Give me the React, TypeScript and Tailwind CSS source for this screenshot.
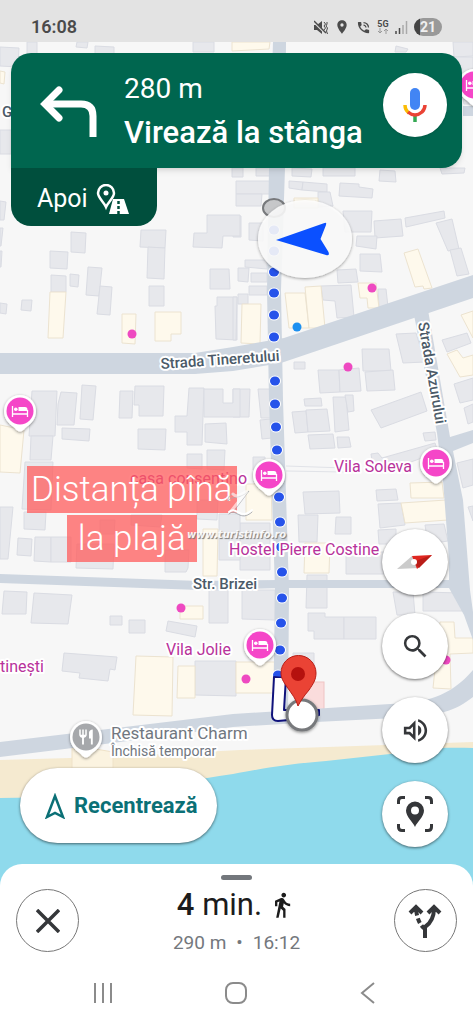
import { ReactNode } from "react";
import {
  MdDirectionsWalk,
  MdLocationOn,
  MdOutlineVolumeUp,
  MdPhoneInTalk,
  MdRestaurant,
  MdSearch,
} from "react-icons/md";

type Point = [number, number];

interface PinProps {
  x: number;
  y: number;
  closed?: boolean;
}

interface RoundButtonProps {
  label: string;
  children: ReactNode;
}

const greyBuildings: string[] = [
  "27,42 37,42 37,54 27,54",
  "77,42 88,42 87,48 76,47",
  "95,46 114,47 114,54 95,54",
  "193,42 214,42 214,52 193,52",
  "0,47 19,48 18,67 0,66",
  "0,130 11,130 11,154 0,154",
  "0,201 6,202 4,220 0,220",
  "0,228 3,228 1,246 0,246",
  "0,251 2,251 1,267 0,267",
  "232,168 243,168 243,177 232,177",
  "236,181 271,181 270,194 236,194",
  "236,194 262,194 261,206 236,206",
  "256,168 270,168 270,176 256,176",
  "292,168 312,169 311,177 292,176",
  "323,168 355,168 355,176 323,176",
  "380,170 395,171 396,182 379,181",
  "440,168 465,168 464,173 442,174",
  "289,181 303,182 302,190 289,188",
  "303,182 327,184 327,192 302,190",
  "340,183 359,184 359,187 373,189 372,198 339,196",
  "318,192 330,192 333,206 318,207",
  "233,216 241,216 241,237 233,237",
  "249,223 263,223 263,241 249,240",
  "343,211 372,211 371,232 345,232",
  "374,221 401,219 403,236 375,238",
  "405,218 444,211 445,218 406,227",
  "436,223 452,219 459,249 448,251",
  "450,250 461,248 469,274 457,276",
  "396,46 408,49 406,52 395,52",
  "453,42 473,42 473,56 454,57",
  "454,57 473,57 473,104 464,104",
  "71,232 86,233 85,253 71,252",
  "50,251 68,252 67,269 50,268",
  "51,275 66,276 66,292 51,292",
  "70,274 79,275 78,287 70,286",
  "88,267 102,268 99,296 86,295",
  "100,286 112,287 110,315 97,314",
  "22,300 32,300 31,311 21,310",
  "0,303 7,304 6,314 0,313",
  "141,230 166,230 165,248 140,247",
  "148,247 165,248 164,279 147,278",
  "149,286 164,286 164,306 149,306",
  "210,269 229,269 230,289 210,289",
  "217,297 237,297 237,340 216,339 215,306 217,306",
  "207,215 240,215 240,236 223,236 222,248 193,247 194,233 207,233",
  "357,236 377,236 376,249 356,246",
  "360,254 380,254 382,272 360,271",
  "337,270 356,269 358,282 338,283",
  "245,260 267,260 267,269 245,267",
  "238,268 249,268 248,282 238,281",
  "251,273 267,273 267,282 251,282",
  "249,286 267,286 267,295 249,295",
  "238,294 248,294 248,304 238,304",
  "233,297 237,297 236,340 233,340",
  "321,286 351,285 354,317 337,318 335,301 323,300",
  "378,289 386,289 388,307 379,307",
  "442,340 467,333 471,343 447,352",
  "454,384 473,378 473,400 460,403",
  "396,334 416,333 425,362 403,363",
  "362,349 389,349 391,371 363,371",
  "365,372 393,370 395,390 367,391",
  "318,370 339,370 340,392 320,393",
  "339,370 359,368 361,391 340,392",
  "294,362 305,362 305,369 294,369",
  "304,399 321,398 322,406 305,406",
  "333,397 346,397 349,430 335,432",
  "345,395 353,395 354,411 348,412",
  "292,412 306,411 308,432 295,433",
  "306,410 327,409 330,431 308,432",
  "233,389 250,389 249,417 233,417",
  "258,389 270,389 272,418 261,418",
  "371,410 421,392 427,411 381,428",
  "464,408 473,404 473,422 468,424",
  "308,435 333,434 335,448 310,449",
  "337,437 349,437 351,447 338,448",
  "260,420 271,419 272,438 262,439",
  "423,433 435,432 436,440 425,441",
  "371,454 378,453 382,458 435,443 438,452 400,466 373,466",
  "253,457 265,457 265,470 253,470",
  "303,492 339,491 340,513 305,514",
  "298,515 318,515 317,542 299,542",
  "336,517 351,517 351,534 335,534",
  "376,490 396,489 398,500 377,501",
  "378,504 401,503 405,525 380,528",
  "378,530 396,529 396,544 379,544",
  "425,525 444,524 448,541 428,544",
  "240,523 270,523 270,570 240,570",
  "346,552 392,552 392,574 346,574",
  "457,463 473,459 473,485 463,488",
  "468,507 473,506 473,521",
  "32,391 57,391 55,436 29,436",
  "61,392 77,393 74,425 57,425 58,404",
  "82,385 96,386 93,420 80,419",
  "120,391 133,391 132,418 119,418",
  "135,386 164,386 163,416 139,416 139,405 134,405",
  "62,428 90,429 89,441 62,439",
  "138,429 166,429 165,450 138,449",
  "31,436 53,436 51,460 30,460",
  "25,462 53,462 51,510 22,509",
  "175,416 187,416 189,388 204,388 202,445 187,445 187,432 175,432",
  "204,389 223,389 223,403 233,403 233,389 240,389 240,417 204,417",
  "205,424 226,423 227,444 205,442",
  "187,454 202,454 202,469 187,468",
  "207,450 225,450 224,470 207,469",
  "24,512 46,512 45,530 24,529",
  "0,507 13,507 8,559 0,559",
  "18,538 32,539 31,556 17,555",
  "35,537 51,537 51,562 34,561",
  "51,537 71,537 71,562 51,562",
  "77,544 114,544 113,569 76,568",
  "100,520 115,520 114,534 100,534",
  "131,515 162,515 160,527 131,525",
  "165,550 189,550 188,568 186,572 165,572",
  "197,500 218,500 217,520 197,519",
  "219,514 240,514 240,560 219,560",
  "4,591 27,592 26,614 2,614",
  "34,593 72,595 68,624 31,623",
  "110,616 122,616 122,625 110,625",
  "129,620 145,620 145,633 129,633",
  "209,590 228,590 228,623 209,623",
  "168,621 197,626 195,637 166,631",
  "64,653 117,657 115,670 110,669 108,681 79,678 80,673 62,671",
  "195,661 236,661 236,696 195,695",
  "242,590 275,590 275,620 242,619",
  "307,575 327,575 327,608 306,608",
  "308,613 325,613 325,617 344,617 344,639 314,639 314,631 308,631",
  "344,617 376,617 376,639 344,639",
  "293,653 314,653 314,683 293,683",
  "393,592 413,592 415,615 397,615",
  "423,592 461,593 462,611 423,611",
];

const yellowBuildings: string[] = [
  "0,71 5,72 4,84 0,83",
  "232,42 270,42 269,49 232,51",
  "294,198 318,198 318,208 294,208",
  "50,292 66,292 63,338 48,338",
  "122,314 136,314 135,344 122,343",
  "155,312 181,312 181,334 171,334 171,341 155,341",
  "404,253 418,249 432,288 424,289 423,286 415,287",
  "242,304 261,304 260,344 241,343",
  "285,293 305,293 309,328 289,328",
  "305,287 321,286 325,328 309,328",
  "358,283 376,283 379,308 368,308 367,298 360,298",
  "461,315 473,311 473,338",
  "447,354 457,350 463,358 473,355 473,375 460,377",
  "246,484 271,484 272,520 246,520",
  "410,483 442,482 444,498 411,498",
  "401,503 446,500 448,520 405,523",
  "305,543 330,543 329,573 304,573",
  "0,425 24,430 20,473 0,472",
  "203,529 218,529 217,576 203,576",
  "180,606 203,606 203,619 180,619",
  "136,656 173,657 172,716 133,715",
  "178,666 195,666 195,698 177,698",
  "236,662 275,662 275,693 236,693",
  "440,622 454,622 455,638 473,638 473,653 450,654 451,689 433,688",
];

const roads: string[] = [
  "273,42 286,42 285,168 281,290 283,400 289,590 288,722 273,724 275,590 269,400 267,290 269,168",
  "0,353 195,353 233,347 284,338 473,275 473,298 281,363 233,371 195,374 0,374",
  "414,315 428,310 450,437 473,430 473,443 453,451 463,500 470,590 473,612 473,640 464,615 449,588 449,560 443,480 437,433",
  "0,574 200,581 280,580 455,580 455,588 280,588 200,590 0,583",
  "463,106 473,106 473,116 463,116",
];

const routeDots: Point[] = [
  [274, 230], [274, 251], [274, 272], [274, 293], [274, 315], [274, 337],
  [275, 358], [275, 381], [275, 404], [276, 427], [277, 450], [279, 497],
  [280, 522], [281, 547], [282, 572], [282, 598], [281, 623], [280, 650],
  [278, 675],
];

const pinkDots: Point[] = [
  [132, 334], [372, 288], [348, 367], [181, 608], [246, 679], [446, 660],
];

const Pin: React.FC<PinProps> = ({ x, y, closed }) => (
  <g transform={`translate(${x} ${y})`}>
    <path
      d="M0 20.500C-3 20.500-4 18-7 15.500-12 12-16 7.500-16 0a16 16 0 0 1 32 0C16 7.500 12 12 7 15.500 4 18 3 20.500 0 20.500Z"
      fill="#fff"
      filter="url(#shadow)"
    />
    <circle r="13.500" fill={closed ? "#a6a8ab" : "#f546c8"} />
    {closed ? (
      <MdRestaurant x={-9} y={-9} size={18} color="#fff" />
    ) : (
      <g stroke="#fff" fill="none" strokeWidth="1.300">
        <path d="M-7.500-5V6M-7.500 3H7.500M7.500 6V-1" />
        <path d="M-1.500-4H5Q7.500-4 7.500-1V0H-1.500Z" fill="#fff" stroke="none" />
        <circle cx="-4.200" cy="-1.800" r="1.800" fill="#fff" stroke="none" />
      </g>
    )}
  </g>
);

const MapView = () => (
  <svg
    className="absolute inset-0 w-full h-full"
    viewBox="0 0 473 1024"
    preserveAspectRatio="xMidYMin slice"
    fontFamily="Roboto, sans-serif">
    <defs>
      <filter id="shadow" x="-30%" y="-30%" width="160%" height="160%">
        <feDropShadow dx="0" dy="1" stdDeviation="1.500" floodOpacity="0.45" />
      </filter>
    </defs>
    <rect width="473" height="1024" fill="#f7f7f7" />
    <path d="M0 760L105 757 240 750 473 742V860H0Z" fill="#f5ead0" />
    <path
      d="M0 798C90 798 160 785 233 774 270 767 290 764 326 761L390 754C410 749 440 747 473 748V900H0Z"
      fill="#8fdaec"
    />
    <path d="M72 745V768H113V752Z" fill="#fbf3e0" stroke="#efe2c8" />
    <g fill="#e7e8ec" stroke="#dadce3" strokeWidth="1">
      {greyBuildings.map((points) => (
        <polygon key={points} points={points} />
      ))}
    </g>
    <g fill="#fef9ec" stroke="#ece3d0" strokeWidth="1">
      {yellowBuildings.map((points) => (
        <polygon key={points} points={points} />
      ))}
    </g>
    <rect x="300" y="682" width="24" height="28" fill="#fadcdc" stroke="#efc4c4" />
    <path d="M286 466L345 468M286 471L345 472" stroke="#e1e3e8" />
    <g fill="#ced6e0">
      {roads.map((points) => (
        <polygon key={points} points={points} />
      ))}
      <path d="M0 742L233 714 390 704C425 703 450 697 473 670V697C455 711 440 716 396 718L316 722 233 727 105 744 0 757Z" />
    </g>

    {/* walking route */}
    <g fill="#2653ea" stroke="#fff" strokeWidth="2" paintOrder="stroke">
      {routeDots.map(([x, y]) => (
        <ellipse key={y} cx={x} cy={y} rx="5" ry="4.500" />
      ))}
    </g>
    <ellipse cx="274" cy="208" rx="11" ry="9" fill="#c6c7c9" stroke="#77797c" strokeWidth="2" />
    {pinkDots.map(([x, y]) => (
      <circle key={x} cx={x} cy={y} r="4.500" fill="#ee49c1" />
    ))}
    <circle cx="297" cy="327" r="4.500" fill="#1d90f0" />

    <g stroke="#fff" strokeWidth="4" strokeLinejoin="round" paintOrder="stroke">
      <g fill="#4b5a68" fontSize="15" fontWeight="500">
        <text x="2" y="117">G</text>
        <text transform="translate(161 369) rotate(-4)">Strada Tineretului</text>
        <text transform="translate(418 323) rotate(80)">Strada Azurului</text>
        <text x="193" y="589">Str. Brizei</text>
      </g>
      <g fill="#b8329b" fontSize="16">
        <text x="130" y="484">casa consentino</text>
        <text x="334" y="472">Vila Soleva</text>
        <text x="229" y="555">Hostel Pierre Costine</text>
        <text x="166" y="655">Vila Jolie</text>
        <text x="0" y="672">tinești</text>
      </g>
      <text x="111" y="739" fill="#717780" fontSize="17">Restaurant Charm</text>
      <text x="111" y="756" fill="#717780" fontSize="14">Închisă temporar</text>
    </g>

    <Pin x={474} y={85} />
    <Pin x={20} y={411} />
    <Pin x={269} y={475} />
    <Pin x={436} y={463} />
    <Pin x={260} y={645} />
    <Pin x={86} y={737} closed />

    {/* heading marker */}
    <ellipse cx="305" cy="239" rx="47" ry="39" fill="#fff" fillOpacity="0.85" filter="url(#shadow)" />
    <path
      d="M276 240L324.500 223Q327 222 326 225L320.500 239 328.500 252Q330 256 326 255Z"
      fill="#0b50ff"
    />

    {/* destination */}
    <path
      d="M274 677H286L284 710H319V715L300 719 278 721Q272 721 272 715Z"
      fill="#fff"
      stroke="#10127c"
      strokeWidth="2"
      strokeLinejoin="round"
    />
    <path d="M274 676Q278 670 284 673V677Z" fill="#2653ea" />
    <circle cx="302" cy="715" r="15" fill="#fff" stroke="#77797b" strokeWidth="3" filter="url(#shadow)" />
    <path
      d="M298 706C296 699 292 694 287 687 283 681 281 678 281 673a17.500 17.500 0 0 1 35 0C316 680 313 684 309 690 304 696 301 700 298 706Z"
      fill="#ea4335"
      stroke="#b81d15"
      strokeWidth="1"
    />
    <circle cx="298" cy="674" r="7" fill="#b5110e" />
  </svg>
);

const Annotation = () => (
  <div className="absolute top-[466px] left-[27px] flex flex-col items-center gap-[2px] font-[Roboto,sans-serif] text-[35px] leading-[47px] text-white">
    <span className="px-1 bg-[#ff5c5c]/75 font-light whitespace-nowrap">Distanța pînă</span>
    <span className="px-[11px] bg-[#ff5c5c]/75 font-light whitespace-nowrap">la plajă</span>
  </div>
);

const Watermark = () => (
  <div className="absolute top-[484px] left-[187px] flex flex-col items-center">
    <svg width="34" height="44" viewBox="0 0 34 44" fill="none" stroke="#fff" strokeLinecap="round">
      <path d="M14 10C10 10 8 13 8 17C12 11 19 16 29 7L14 27" stroke="#a9abb0" strokeWidth="1" opacity="0.7" />
      <path d="M13 10C16 14 20 11 27 7L12 26" strokeWidth="3" opacity="0.6" />
      <path d="M9 30C16 23 20 39 32 28" stroke="#a9abb0" strokeWidth="1" />
      <path d="M9 28C16 21 20 37 32 26" strokeWidth="2" />
    </svg>
    <span className="font-['DejaVu_Sans',sans-serif] text-[10px] leading-[14px] font-bold italic text-white/90 [text-shadow:1px_1px_1px_#777]">
      www.turistinfo.ro
    </span>
  </div>
);

const StatusBar = () => (
  <header className="flex items-center justify-between h-[42px] pt-3 pl-[31px] pr-[31px] bg-[#e1e1e1]/95 text-[#4b4b4b]">
    <time className="text-[18px] leading-5 font-semibold">16:08</time>
    <div className="flex items-center gap-[6px]">
      <svg width="14" height="15" viewBox="0 0 14 15" fill="currentColor">
        <path d="M0 5H3L8 1V14L3 10H0Z" />
        <path d="M0 2L12 14" stroke="#e1e1e1" strokeWidth="2" />
        <path d="M0 1L12 13" stroke="currentColor" strokeWidth="1.500" />
        <path d="M10 2l1.500 2-1.500 2 1.500 2-1.500 2M13 2v2l-1 2 1.500 2-1 3 1 3" fill="none" stroke="currentColor" />
      </svg>
      <MdLocationOn size={16} />
      <MdPhoneInTalk size={15} />
      <span className="flex flex-col items-center text-[9px] leading-2 font-bold">
        5G
        <svg width="12" height="6" viewBox="0 0 12 6" fill="none" stroke="#999">
          <path d="M3 0V5M1 3L3 5 5 3M9 6V1M7 3L9 1 11 3" />
        </svg>
      </span>
      <svg width="13" height="13" viewBox="0 0 13 13">
        <path d="M1 10V13M4.500 7V13" stroke="#4b4b4b" strokeWidth="1.500" />
        <path d="M8 4V13M11.500 0V13" stroke="#aaa" strokeWidth="1.500" />
      </svg>
      <span className="w-7 h-[18px] rounded-full bg-linear-to-r from-[#444] from-20% to-[#999] to-20% text-[#f0f0f0] text-[14px] leading-[18px] font-bold text-center">
        21
      </span>
    </div>
  </header>
);

const DirectionBanner = () => (
  <section className="relative mt-[11px] mx-[11px]">
    <div className="flex items-center h-[115px] pl-7 pr-[15px] rounded-[20px] rounded-bl-none bg-[#00664f] text-white shadow-md">
      <svg width="60" height="52" viewBox="0 0 60 52" fill="none" stroke="#fff" strokeWidth="7">
        <path d="M20 5L6 19 20 33" strokeWidth="7" strokeLinecap="round" />
        <path d="M7 19H42Q54 19 54 31V52" />
      </svg>
      <div className="grow pl-[25px]">
        <p className="text-[28px] leading-[44px]">280 m</p>
        <p className="text-[31px] leading-[44px] font-medium whitespace-nowrap">Virează la stânga</p>
      </div>
      <button
        aria-label="Voice"
        className="flex items-center justify-center shrink-0 w-16 h-16 mb-3 rounded-full bg-white shadow">
        <svg width="26" height="36" viewBox="0 0 26 36" fill="none" strokeWidth="3.500">
          <rect x="8" y="1" width="10" height="22" rx="5" fill="#4285f4" />
          <path d="M13 28V35" stroke="#34a853" />
          <path d="M3 18Q3 23 7 26" stroke="#fbbc04" />
          <path d="M6 25Q13 31 20 25 23 22 23 18" stroke="#ea4335" />
        </svg>
      </button>
    </div>
    <div className="flex items-center gap-2 w-[146px] h-[58px] pt-1 pl-[26px] rounded-b-[20px] bg-[#004f3d] text-white text-[25px]">
      Apoi
      <svg width="33" height="30" viewBox="0 0 33 30">
        <path
          d="M10 23C8 18 2 14 2 9a8 8 0 0 1 16 0C18 14 12 18 10 23Z"
          fill="none"
          stroke="#fff"
          strokeWidth="2.500"
        />
        <circle cx="10" cy="9" r="2.500" fill="#fff" />
        <path d="M17 15H28L33 30H13Z" fill="#fff" />
        <path d="M22.500 17V20M22.500 22V25M22.500 27V30" stroke="#004f3d" strokeWidth="2.500" />
      </svg>
    </div>
  </section>
);

const RoundButton: React.FC<RoundButtonProps> = ({ label, children }) => (
  <button
    aria-label={label}
    className="flex items-center justify-center w-[66px] h-[66px] rounded-full bg-white text-[#35373a] shadow-[0_1px_3px_rgba(0,0,0,0.55)]">
    {children}
  </button>
);

const MapControls = () => (
  <div className="relative flex items-end justify-between mt-auto pl-5 pr-[25px] pb-[17px]">
    <button className="flex items-center gap-[9px] h-[75px] pl-[25px] pr-[19px] mb-1 rounded-full bg-white text-[#0b7076] text-[22px] font-bold shadow-[0_1px_3px_rgba(0,0,0,0.55)]">
      <svg width="20" height="26" viewBox="0 0 20 26" fill="none" stroke="currentColor" strokeWidth="2.500">
        <path d="M10 3L18 24 10 20 2 24Z" />
      </svg>
      Recentrează
    </button>
    <div className="flex flex-col gap-[18px]">
      <RoundButton label="Compass">
        <svg width="36" height="16" viewBox="0 0 36 16">
          <path d="M0 15L15 2 22 14Z" fill="#cbcbcb" />
          <path d="M15 2L35 1 20 15Z" fill="#df2620" />
          <path d="M22 14L35 1 16 8Z" fill="#b91d18" />
          <circle cx="17" cy="8" r="3" fill="#fff" />
        </svg>
      </RoundButton>
      <RoundButton label="Search">
        <MdSearch size={31} />
      </RoundButton>
      <RoundButton label="Sound">
        <MdOutlineVolumeUp size={31} />
      </RoundButton>
      <RoundButton label="Live view">
        <svg width="36" height="36" viewBox="0 0 36 36" fill="none" stroke="currentColor" strokeWidth="3">
          <path d="M1.500 8V5Q1.500 1.500 5 1.500H8M28 1.500H31Q34.500 1.500 34.500 5V8M34.500 28V31Q34.500 34.500 31 34.500H28M8 34.500H5Q1.500 34.500 1.500 31V28" />
          <path
            d="M18 31C16 26 9 21 9 14.500a9 9 0 0 1 18 0C27 21 20 26 18 31Z M18 10.500a4 4 0 1 0 0 8 4 4 0 0 0 0-8Z"
            fill="currentColor"
            fillRule="evenodd"
            stroke="none"
          />
        </svg>
      </RoundButton>
    </div>
  </div>
);

const TripSheet = () => (
  <section className="relative px-4 pt-[11px] rounded-t-[22px] bg-white">
    <div className="w-[31px] h-[5px] mx-auto rounded-full bg-[#73777c]" />
    <div className="flex items-start justify-between pt-[9px]">
      <button
        aria-label="Close"
        className="flex items-center justify-center w-[63px] h-[63px] rounded-full border border-[#777] text-[#35373a]">
        <svg width="24" height="24" viewBox="0 0 24 24" stroke="currentColor" strokeWidth="3.500">
          <path d="M1 1L23 23M23 1L1 23" />
        </svg>
      </button>
      <div className="flex flex-col items-center">
        <p className="flex items-center gap-[6px] text-[31px] leading-8 text-[#1c1c1c]">
          <span>
            <span className="font-medium">4</span> min.
          </span>
          <MdDirectionsWalk size={28} />
        </p>
        <p className="flex gap-[10px] pt-1 text-[19px] leading-9 text-[#74787d]">
          <span>290 m</span>
          <span>•</span>
          <span>16:12</span>
        </p>
      </div>
      <button
        aria-label="Routes"
        className="flex items-center justify-center w-[63px] h-[63px] rounded-full border border-[#777] text-[#35373a]">
        <svg width="34" height="36" viewBox="0 0 34 36" fill="none" stroke="currentColor" strokeWidth="4">
          <path d="M17 35V24Q26 18 26 5" />
          <path d="M17 26Q9 20 8 5" strokeDasharray="5 3" />
          <path d="M2 10L8 4 14 10M20 10L26 4 32 10" />
          <path d="M8 2L3 9H13ZM26 2L21 9H31Z" fill="currentColor" stroke="none" />
        </svg>
      </button>
    </div>
    <nav className="flex items-center justify-between h-[63px] pl-[77px] pr-[79px] text-[#8b8b8b]">
      <button aria-label="Recent apps">
        <svg width="20" height="20" viewBox="0 0 20 20" stroke="currentColor" strokeWidth="2">
          <path d="M2 0V20M10 0V20M18 0V20" />
        </svg>
      </button>
      <button aria-label="Home">
        <svg width="22" height="22" viewBox="0 0 22 22" fill="none" stroke="currentColor" strokeWidth="2">
          <rect x="1" y="1" width="20" height="20" rx="7" />
        </svg>
      </button>
      <button aria-label="Back">
        <svg width="20" height="22" viewBox="0 0 20 22" fill="none" stroke="currentColor" strokeWidth="2">
          <path d="M16 1L4 11 16 21" />
        </svg>
      </button>
    </nav>
  </section>
);

const App = () => {
  return (
    <main className="relative flex flex-col min-h-screen overflow-hidden font-[Roboto,sans-serif]">
      <MapView />
      <Annotation />
      <Watermark />
      <div className="relative">
        <StatusBar />
        <DirectionBanner />
      </div>
      <MapControls />
      <TripSheet />
    </main>
  );
};

export default App;
